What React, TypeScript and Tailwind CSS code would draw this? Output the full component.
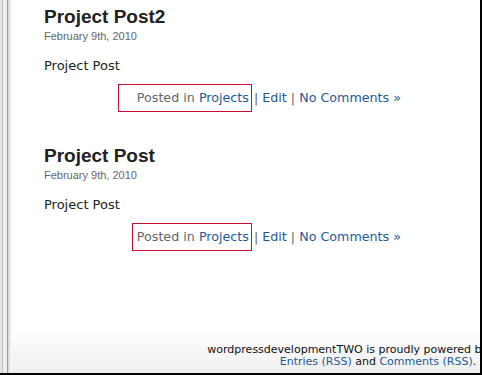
import React from 'react';

interface PostProps {
  title: string;
  date: string;
  body: string;
  boxClass: string;
}

const Post = ({ title, date, body, boxClass }: PostProps) => {
  return (
    <div className="pl-[44px]">
      <h2 className="text-[19px] leading-[26px] font-bold text-[#222] font-['Liberation_Sans',Arial,sans-serif]">
        {title}
      </h2>
      <div className="text-[11px] leading-[13px] text-[#666] font-['Liberation_Sans',Arial,sans-serif]">{date}</div>
      <p className="mt-[15px] text-[13px] leading-[16px] text-[#222] font-['DejaVu_Sans',sans-serif]">{body}</p>
      {/* post meta */}
      <div className="mt-[10px] h-[28px] w-[357px] flex justify-end items-stretch text-[12.7px] font-['DejaVu_Sans',sans-serif] text-[#666] whitespace-nowrap">
        <span className={`border border-[#c8102e] flex items-center ${boxClass}`}>
          Posted in&nbsp;<a className="text-[#1f5a96]">Projects</a>
        </span>
        <span className="flex items-center pl-[2px]">
          |&nbsp;<a className="text-[#1f5a96]">Edit</a>&nbsp;|&nbsp;<a className="text-[#1f5a96]">No Comments »</a>
        </span>
      </div>
    </div>
  );
};

export default function App() {
  return (
    <div className="w-[482px] h-[375px] overflow-hidden flex bg-white border-r-2 border-b-2 border-black">
      {/* left page edge */}
      <div className="flex shrink-0">
        <div className="w-[2px] bg-[#e4e4e4]" />
        <div className="w-[1px] bg-[#c4c4c4]" />
        <div className="w-[4px] bg-[#ededed]" />
        <div className="w-[1px] bg-[#9c9c9c]" />
        <div className="w-[2px] bg-[#dcdcdc]" />
        <div className="w-[2px] bg-[#f7f7f7]" />
      </div>

      <div className="flex-1 flex flex-col relative min-w-0">
        <div className="pt-[4px] -ml-[12px]">
          <Post title="Project Post2" date="February 9th, 2010" body="Project Post" boxClass="pl-[18px] pr-[2px]" />
          <div className="h-[31px]" />
          <Post title="Project Post" date="February 9th, 2010" body="Project Post" boxClass="pl-[4px] pr-[2px]" />
        </div>

        {/* footer */}
        <div className="mt-auto h-[45px] bg-gradient-to-b from-white to-[#efefef] overflow-hidden">
          <div className="w-[744px] -ml-[6px] pt-[16px] text-center text-[11px] leading-[12px] font-['DejaVu_Sans',sans-serif] text-[#111] whitespace-nowrap">
            <div>wordpressdevelopmentTWO is proudly powered by <a className="text-[#1f5a96]">WordPress</a></div>
            <div>
              <a className="text-[#1f5a96]">Entries (RSS)</a> and <a className="text-[#1f5a96]">Comments (RSS)</a>.
            </div>
          </div>
        </div>
      </div>
    </div>
  );
}
